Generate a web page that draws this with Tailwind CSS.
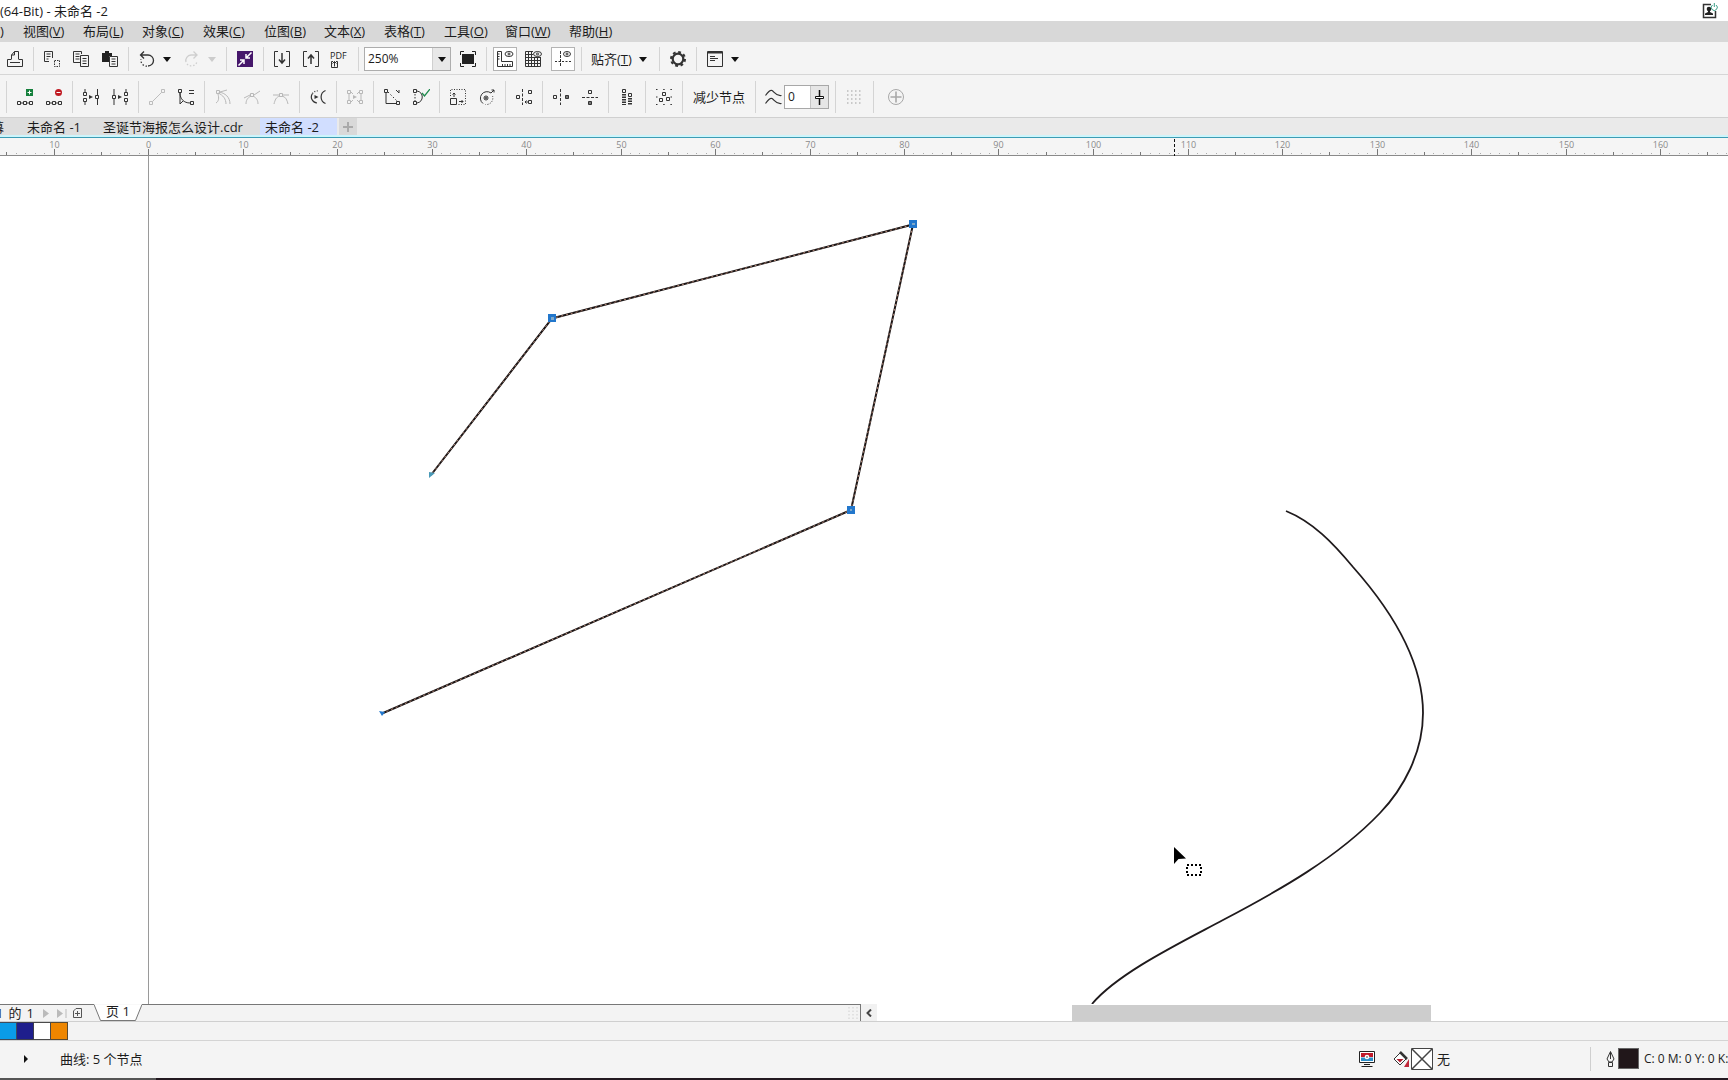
<!DOCTYPE html>
<html lang="zh-CN">
<head>
<meta charset="utf-8">
<title>未命名 -2</title>
<script src="https://cdn.jsdelivr.net/npm/@tailwindcss/browser@4"></script>
</head>
<body class="flex h-screen flex-col overflow-hidden bg-white font-['Open_Sans','Noto_Sans_CJK_SC',sans-serif] text-[13px] leading-4 text-[#1c1c1c]">

<!-- Title bar -->
<header class="flex h-[21px] shrink-0 items-center justify-between pr-2.5">
  <h1>(64-Bit) - 未命名 -2</h1>
  <button aria-label="登录" class="h-4 w-4">
    <svg width="16" height="16" viewBox="0 0 16 16" fill="none"><path d="M9 1.5H1.5v13h12V8" stroke="#333" stroke-width="1.5"/><circle cx="7" cy="6" r="2.3" fill="#222"/><path d="M6 7h2v2l3 1.5V12H3v-1.500L6 9z" fill="#222"/><path d="M10.500 2a3 3 0 1 0 3.500 0M12.300 0v4" stroke="#3a9d86"/></svg>
  </button>
</header>

<!-- Menu bar -->
<nav class="h-[21px] shrink-0 bg-[#d8d8d8] pb-0.5">
  <ul class="flex h-full items-center whitespace-nowrap">
    <li class="w-[23px]"><a href="#">)</a></li>
    <li class="w-[60px]"><a href="#">视图(<u>V</u>)</a></li>
    <li class="w-[59px]"><a href="#">布局(<u>L</u>)</a></li>
    <li class="w-[61px]"><a href="#">对象(<u>C</u>)</a></li>
    <li class="w-[61px]"><a href="#">效果(<u>C</u>)</a></li>
    <li class="w-[60px]"><a href="#">位图(<u>B</u>)</a></li>
    <li class="w-[60px]"><a href="#">文本(<u>X</u>)</a></li>
    <li class="w-[60px]"><a href="#">表格(<u>T</u>)</a></li>
    <li class="w-[61px]"><a href="#">工具(<u>O</u>)</a></li>
    <li class="w-[64px]"><a href="#">窗口(<u>W</u>)</a></li>
    <li><a href="#">帮助(<u>H</u>)</a></li>
  </ul>
</nav>

<!-- Standard toolbar -->
<div role="toolbar" aria-label="标准" class="flex h-[33px] shrink-0 items-center border-b border-[#d6d6d6] bg-[#f4f4f4] pl-px pt-0.5">
  <button aria-label="打印" class="w-[29px] pl-1.5"><svg width="16" height="16" viewBox="0 0 16 16" fill="none" stroke="#333"><path d="M4.500 8.500V4l3-3.500h4v8M7.500 .5V4h-3M4 8.500H.5v7h15v-7H12M3 11.500h10"/></svg></button>
  <span class="ml-[3px] mr-1 h-6 w-px bg-[#d4d4d4]"></span>
  <button aria-label="剪切" class="w-[29px] pl-1.5"><svg width="16" height="16" viewBox="0 0 16 16" fill="none" stroke="#333"><path d="M5 10.500H.5v-10h8V7M2.500 3h4M2.500 5.500h4M2.500 8h2"/><path d="M10.500 9.500h5v6h-5z" stroke-dasharray="1.500 1"/></svg></button>
  <button aria-label="复制" class="w-[29px] pl-1.5"><svg width="16" height="16" viewBox="0 0 16 16" fill="none" stroke="#333"><path d="M7 11.500H.5v-11h8V3M2.500 3h4M2.500 5.500h4M2.500 8h4M7.500 4.500h8v11h-8zM9.500 7.500h4M9.500 10h4M9.500 12.500h4"/></svg></button>
  <button aria-label="粘贴" class="w-[29px] pl-1.5"><svg width="16" height="16" viewBox="0 0 16 16" fill="none" stroke="#333"><path d="M0 2h3V0h4v2h3v3H7v6H0z" fill="#222" stroke="none"/><path d="M7.500 5.500h8v10h-8zM9.500 8h4M9.500 10.500h4M9.500 13h4"/></svg></button>
  <span class="ml-[3px] mr-1 h-6 w-px bg-[#d4d4d4]"></span>
  <button aria-label="撤消" class="w-[29px] pl-1.5"><svg width="16" height="16" viewBox="0 0 16 16" fill="none" stroke="#333" stroke-width="1.300"><path d="M1.500 4H9a5.500 5.500 0 0 1 0 11M5 .5L1.500 4 5 7.500"/><path d="M8 15.200a6 6 0 0 1-6-7" stroke-dasharray="1.500 1.800"/></svg></button>
  <button aria-label="撤消列表" class="w-4"><svg width="10" height="5" viewBox="0 0 10 5"><path d="M1 0h8L5 5z" fill="#111"/></svg></button>
  <button aria-label="重做" disabled class="w-[29px] pl-1.5"><svg width="16" height="16" viewBox="0 0 16 16" fill="none" stroke="#cfcfcf" stroke-width="1.300"><path d="M13 4H7a5.500 5.500 0 0 0-5 7M9.500 .5L13 4 9.500 7.500"/><path d="M3 13a6 6 0 0 0 10-2" stroke-dasharray="1.500 1.800"/></svg></button>
  <button aria-label="重做列表" disabled class="w-4"><svg width="10" height="5" viewBox="0 0 10 5"><path d="M1 0h8L5 5z" fill="#ccc"/></svg></button>
  <span class="ml-[3px] mr-1 h-6 w-px bg-[#d4d4d4]"></span>
  <button aria-label="搜索内容" class="w-[29px] pl-1.5"><svg width="16" height="16" viewBox="0 0 16 16" fill="none" stroke="#fff"><path d="M0 0h16v16H0z" fill="#46176b" stroke="none"/><path d="M14.500 1.500L9.500 6.500M9 3v4h4M1.500 14.500l5-5M7 13V9H3" stroke-width="1.500"/></svg></button>
  <span class="ml-[3px] mr-1 h-6 w-px bg-[#d4d4d4]"></span>
  <button aria-label="导入" class="w-[29px] pl-1.5"><svg width="16" height="16" viewBox="0 0 16 16" fill="none" stroke="#333"><path d="M4 .5H.5v15H4M12 .5h3.500v15H12"/><path d="M8 2v9M5 8.500L8 12l3-3.500" stroke-width="1.500"/></svg></button>
  <button aria-label="导出" class="w-[29px] pl-1.5"><svg width="16" height="16" viewBox="0 0 16 16" fill="none" stroke="#333"><path d="M4 .5H.5v15H4M12 .5h3.500v15H12"/><path d="M8 13V4M5 7.500L8 4l3 3.500" stroke-width="1.500"/></svg></button>
  <button aria-label="发布为 PDF" class="flex w-[29px] flex-col items-start pl-1 text-[9px] leading-[9px]">PDF<svg width="16" height="8" viewBox="0 0 16 8" fill="none" stroke="#333"><path d="M3 1.500H1.500v6h6v-6H6M4.500 6.500V1.500M2.500 3.500l2-2 2 2"/></svg></button>
  <span class="ml-[3px] mr-[5px] h-6 w-px bg-[#d4d4d4]"></span>
  <div class="flex h-6 w-[87px] border border-[#adadad] bg-white">
    <input aria-label="缩放级别" value="250%" class="w-0 flex-1 pl-[3px] text-[12px] outline-none">
    <button aria-label="缩放列表" class="flex w-[18px] items-center justify-center border-l border-[#d0d0d0] bg-[#e8e8e8]"><svg width="8" height="5" viewBox="0 0 8 5"><path d="M0 0h8L4 5z" fill="#111"/></svg></button>
  </div>
  <button aria-label="全屏预览" class="ml-[3px] w-[29px] pl-1.5"><svg width="16" height="16" viewBox="0 0 16 16" fill="none" stroke="#222"><path d="M2 3h12v10H2z" fill="#222" stroke="none"/><path d="M4 .5H.5V4M12 .5h3.500V4M4 15.500H.5V12M12 15.500h3.500V12"/></svg></button>
  <span class="ml-[3px] mr-1.5 h-6 w-px bg-[#d4d4d4]"></span>
  <button aria-label="显示标尺" aria-pressed="true" class="mr-[5px] flex h-6 w-6 items-center justify-center border border-[#b4b4b4] bg-white"><svg width="18" height="16" viewBox="0 0 18 16" fill="none" stroke="#333"><path d="M1.500 .5h4v10h11v5h-15zM1.500 3h2M1.500 5.500h2M1.500 8h2M6.500 15.500V13M9 15.500V13M11.500 15.500V13M14 15.500V13"/><ellipse cx="13" cy="3" rx="4" ry="2.500"/><circle cx="13" cy="3" r="1"/></svg></button>
  <button aria-label="显示网格" class="mr-[5px] flex h-6 w-6 items-center justify-center"><svg width="18" height="16" viewBox="0 0 18 16" fill="none" stroke="#333"><path d="M8 .5H.5v15h15V6M.5 3.500H8M.5 6.500h15M.5 9.500h15M.5 12.500h15M3.500 .5v15M6.500 .5v15M9.500 6v9.500M12.500 6v9.500"/><ellipse cx="12.500" cy="3" rx="4" ry="2.500"/><circle cx="12.500" cy="3" r="1"/></svg></button>
  <button aria-label="显示辅助线" aria-pressed="true" class="flex h-6 w-6 items-center justify-center border border-[#b4b4b4] bg-white"><svg width="18" height="16" viewBox="0 0 18 16" fill="none" stroke="#333"><path d="M6.500 0v16" stroke-dasharray="3 1"/><path d="M1 10.500h16" stroke-dasharray="2 1.500"/><ellipse cx="13" cy="3" rx="3.500" ry="2.500"/><circle cx="13" cy="3" r="1"/></svg></button>
  <span class="ml-1.5 mr-1 h-6 w-px bg-[#d4d4d4]"></span>
  <button class="flex w-[70px] items-center gap-1.5 whitespace-nowrap pl-[5px]"><span>贴齐(<u>T</u>)</span><svg class="shrink-0" width="10" height="5" viewBox="0 0 10 5"><path d="M1 0h8L5 5z" fill="#111"/></svg></button>
  <span class="ml-[3px] mr-1 h-6 w-px bg-[#d4d4d4]"></span>
  <button aria-label="选项" class="w-[29px] pl-1.5"><svg width="16" height="16" viewBox="0 0 16 16" fill="none" stroke="#333"><circle cx="8" cy="8" r="5.300" stroke-width="2.200"/><circle cx="8" cy="8" r="7" stroke-width="2" stroke-dasharray="2.800 2.700"/></svg></button>
  <span class="ml-[3px] mr-1 h-6 w-px bg-[#d4d4d4]"></span>
  <button aria-label="启动器" class="w-[29px] pl-1.5"><svg width="16" height="16" viewBox="0 0 16 16" fill="none" stroke="#333"><path d="M.5 .5h15v15H.5z"/><path d="M1 1.500h14" stroke-width="2"/><path d="M3 5.500h5M3 7.500h8M3 9.500h5"/></svg></button>
  <button aria-label="启动器列表" class="w-4"><svg width="10" height="5" viewBox="0 0 10 5"><path d="M1 0h8L5 5z" fill="#111"/></svg></button>
</div>

<!-- Node editing toolbar -->
<div role="toolbar" aria-label="节点" class="flex h-[43px] shrink-0 items-center border-b border-[#d0d0d0] bg-[#f4f4f4] pl-[3px] pt-0.5">
  <span class="ml-[3px] mr-1 h-8 w-px bg-[#d4d4d4]"></span>
  <button aria-label="添加节点" class="w-[29px] pl-1.5"><svg width="16" height="16" viewBox="0 0 16 16" fill="none" stroke="#333"><path d="M9 0h7v7H9z" fill="#15803c" stroke="none"/><path d="M10.500 3.500h4M12.500 1.500v4" stroke="#fff"/><path d="M.5 12.500h3v3h-3zM6.500 12.500h3v3h-3zM12.500 12.500h3v3h-3zM3.500 14h3M9.500 14h3"/></svg></button>
  <button aria-label="删除节点" class="w-[29px] pl-1.5"><svg width="16" height="16" viewBox="0 0 16 16" fill="none" stroke="#333"><circle cx="12.500" cy="3.500" r="3.500" fill="#c01a22" stroke="none"/><path d="M10.500 3.500h4" stroke="#fff"/><path d="M.5 12.500h3v3h-3zM6.500 12.500h3v3h-3zM12.500 12.500h3v3h-3zM3.500 14h3M9.500 14h3"/></svg></button>
  <span class="ml-[3px] mr-1 h-8 w-px bg-[#d4d4d4]"></span>
  <button aria-label="连接两个节点" class="w-[29px] pl-1.5"><svg width="16" height="16" viewBox="0 0 16 16" fill="none" stroke="#333"><path d="M.5 3.500h3v3h-3zM.5 9.500h3v3h-3zM2 0v3M2 13v3M12.500 6.500h3v3h-3zM14.500 0v6M14.500 10v6"/><path d="M6 6l4 2-4 2z" fill="#333" stroke="none"/></svg></button>
  <button aria-label="断开曲线" class="w-[29px] pl-1.5"><svg width="16" height="16" viewBox="0 0 16 16" fill="none" stroke="#333"><path d="M12.500 3.500h3v3h-3zM12.500 9.500h3v3h-3zM14 0v3M14 13v3M.5 6.500h3v3h-3zM2 0v6M2 10v6"/><path d="M6 6l4 2-4 2z" fill="#333" stroke="none"/></svg></button>
  <span class="ml-[3px] mr-1 h-8 w-px bg-[#d4d4d4]"></span>
  <button aria-label="转换为线条" disabled class="w-[29px] pl-1.5"><svg width="16" height="16" viewBox="0 0 16 16" fill="none" stroke="#bdbdbd"><path d="M.5 12.500h3v3h-3zM12.500 .5h3v3h-3zM3.500 12.500l9-9"/></svg></button>
  <button aria-label="转换为曲线" class="w-[29px] pl-1.5"><svg width="16" height="16" viewBox="0 0 16 16" fill="none" stroke="#333"><path d="M.5 .5h3v3h-3zM12.500 12.500h3v3h-3zM2 4c0 6 4 10 10 10M2 4v11l3-3M11 1.500h5M11 4.500h5"/></svg></button>
  <span class="ml-[3px] mr-1 h-8 w-px bg-[#d4d4d4]"></span>
  <button aria-label="尖突节点" disabled class="w-[29px] pl-1.5"><svg width="16" height="16" viewBox="0 0 16 16" fill="none" stroke="#b8b8b8"><path d="M1.500 1.500h3v3h-3zM4 3c6 1 11 5 11 12M3 4c5 2 8 6 8 11M3 5C4 9 4 12 1 14M5 3l7-2"/></svg></button>
  <button aria-label="平滑节点" disabled class="w-[29px] pl-1.5"><svg width="16" height="16" viewBox="0 0 16 16" fill="none" stroke="#b8b8b8"><path d="M6.500 4.500h3v3h-3zM0 9l6-3M10 6l6-4M7 7c-4 2-5 5-5 8M9 7c4 2 5 5 5 8"/></svg></button>
  <button aria-label="对称节点" disabled class="w-[29px] pl-1.5"><svg width="16" height="16" viewBox="0 0 16 16" fill="none" stroke="#b8b8b8"><path d="M6.500 4.500h3v3h-3zM0 6h6M10 6h6M7 7c-4 1-5 4-6 8M9 7c4 1 5 4 6 8"/></svg></button>
  <span class="ml-[3px] mr-1 h-8 w-px bg-[#d4d4d4]"></span>
  <button aria-label="反转方向" class="w-[29px] pl-1.5"><svg width="16" height="16" viewBox="0 0 16 16" fill="none" stroke="#333" stroke-width="1.200"><path d="M2.500 4.500a6 6 0 0 0 4.500 9.500M15.500 1.500a7 7 0 0 0 0 13"/><path d="M2.500 4.500A6 6 0 0 1 8 2" stroke-dasharray="1 1.500"/><path d="M4.500 6l4 2-4 2z" fill="#333" stroke="none"/></svg></button>
  <span class="ml-[3px] mr-1 h-8 w-px bg-[#d4d4d4]"></span>
  <button aria-label="提取子路径" disabled class="w-[29px] pl-1.5"><svg width="16" height="16" viewBox="0 0 16 16" fill="none" stroke="#b8b8b8"><path d="M.5 1.500h3v3h-3zM.5 11.500h3v3h-3zM12.500 1.500h3v3h-3zM12.500 11.500h3v3h-3zM2 5v6M14 5v6M4 3l2 2M4 13l2-2M12 3l-2 2M12 13l-2-2"/><path d="M6 6l4 2-4 2z" fill="#b8b8b8" stroke="none"/></svg></button>
  <span class="ml-[3px] mr-1 h-8 w-px bg-[#d4d4d4]"></span>
  <button aria-label="延长曲线使之闭合" class="w-[29px] pl-1.5"><svg width="16" height="16" viewBox="0 0 16 16" fill="none" stroke="#333"><path d="M.5 .5h3v3h-3zM12.500 12.500h3v3h-3zM2 4v10.500h10"/><path d="M4 3l9 9" stroke-dasharray="1.500 2"/><path d="M12 1l3 3M15 1v3"/></svg></button>
  <button aria-label="闭合曲线" class="w-[29px] pl-1.5"><svg width="17" height="16" viewBox="0 0 17 16" fill="none" stroke="#333"><path d="M.5 .5h3v3h-3zM.5 12.500h3v3h-3zM4 2c7 1 7 11 0 12"/><path d="M2 5v7" stroke-dasharray="1.500 1.500"/><path d="M9 4l2.500 3L17 0" stroke="#1e8a4c" stroke-width="1.300"/></svg></button>
  <span class="ml-[3px] mr-1 h-8 w-px bg-[#d4d4d4]"></span>
  <button aria-label="延展与缩放节点" class="w-[29px] pl-1.5"><svg width="16" height="16" viewBox="0 0 16 16" fill="none" stroke="#333"><path d="M.5 9.500h6v6h-6z"/><path d="M.5 7V.5h15v15H8" stroke-dasharray="1 1.500"/><path d="M4 4v4M2.500 5.500L4 4l1.500 1.500M9 12.500h4M11.500 11l1.500 1.500-1.500 1.500"/></svg></button>
  <button aria-label="旋转与倾斜节点" class="w-[29px] pl-1.5"><svg width="16" height="16" viewBox="0 0 16 16" fill="none" stroke="#333"><path d="M4 14.500A6.500 6.500 0 1 1 12 4"/><path d="M13.500 7a6.500 6.500 0 0 1-7 8.500" stroke-dasharray="1 1.500"/><circle cx="7" cy="9" r="2"/><circle cx="7" cy="9" r=".7"/><path d="M12 4l3-3M12.500 1H15v2.500"/></svg></button>
  <span class="ml-[3px] mr-1 h-8 w-px bg-[#d4d4d4]"></span>
  <button aria-label="对齐节点" class="w-[29px] pl-1.5"><svg width="16" height="16" viewBox="0 0 16 16" fill="none" stroke="#333"><path d="M.5 6.500h3v3h-3zM12.500 1.500h3v3h-3zM12.500 11.500h3v3h-3z"/><path d="M6.500 0v16" stroke-dasharray="3 1.500"/><path d="M9 13h3M10.500 11.500L9 13l1.500 1.500"/></svg></button>
  <span class="ml-[3px] mr-1 h-8 w-px bg-[#d4d4d4]"></span>
  <button aria-label="水平反射节点" class="w-[29px] pl-1.5"><svg width="16" height="16" viewBox="0 0 16 16" fill="none" stroke="#333"><path d="M.5 6.500h3v3h-3z"/><path d="M12.500 6.500h3v3h-3z" fill="#777"/><path d="M7.500 0v16" stroke-dasharray="3 1.500"/></svg></button>
  <button aria-label="垂直反射节点" class="w-[29px] pl-1.5"><svg width="16" height="16" viewBox="0 0 16 16" fill="none" stroke="#333"><path d="M6.500 1.500h3v3h-3z"/><path d="M6.500 12.500h3v3h-3z" fill="#777"/><path d="M0 8.500h16" stroke-dasharray="3 1.500"/></svg></button>
  <span class="ml-[3px] mr-1 h-8 w-px bg-[#d4d4d4]"></span>
  <button aria-label="弹性模式" class="w-[29px] pl-1.5"><svg width="16" height="16" viewBox="0 0 16 16" fill="none" stroke="#333"><path d="M3.500 .5h3v3h-3zM9.500 4.500h3v3h-3z"/><path d="M5 5v11M11 9v7" stroke-width="4" stroke-dasharray="1.500 1"/></svg></button>
  <span class="ml-[3px] mr-1 h-8 w-px bg-[#d4d4d4]"></span>
  <button aria-label="选择所有节点" class="w-[29px] pl-1.5"><svg width="16" height="16" viewBox="0 0 16 16" fill="none" stroke="#333"><path d="M6.500 3.500h3v3h-3zM3.500 9.500h3v3h-3zM10.500 8.500h3v3h-3z"/><path d="M0 .5h16M0 15.500h16" stroke-dasharray="1.500 5.700"/><path d="M0 8h1.500M14.500 8H16"/></svg></button>
  <span class="ml-[3px] mr-1 h-8 w-px bg-[#d4d4d4]"></span>
  <button class="w-[65px] whitespace-nowrap pl-1.5 text-left">减少节点</button>
  <span class="ml-[3px] mr-1 h-8 w-px bg-[#d4d4d4]"></span>
  <label for="smooth" aria-label="曲线平滑度" class="w-6 pl-[5px]"><svg width="17" height="16" viewBox="0 0 17 16" fill="none" stroke="#333" stroke-width="1.200"><path d="M.5 6.500C3 3 5 .5 7 1.500s4 6 9.500 5M.5 14.500C3 11 5 8.500 7 9.500s4 6 9.500 5"/></svg></label>
  <div class="mr-[3px] flex h-6 w-[45px] border border-[#a8a8a8] bg-white">
    <input id="smooth" value="0" class="w-0 flex-1 pl-[3px] text-[12px] outline-none">
    <button aria-label="平滑度滑块" class="flex w-[18px] items-center justify-center border-l border-[#c4c4c4] bg-[#e6e6e6]"><svg width="9" height="15" viewBox="0 0 9 15" fill="#fff" stroke="#111"><path d="M4.500 0v15" stroke-width="1.500"/><path d="M.5 6.500h8v2h-8z"/></svg></button>
  </div>
  <span class="ml-[3px] mr-1 h-8 w-px bg-[#d4d4d4]"></span>
  <button aria-label="边框" disabled class="w-[29px] pl-1.5"><svg width="16" height="16" viewBox="0 0 16 16" fill="none" stroke="#bbb" stroke-width="1.500"><path d="M1 2h15M1 6h15M1 10h15M1 14h15" stroke-dasharray="1.500 2.500"/></svg></button>
  <span class="ml-1 mr-2 h-8 w-px bg-[#d4d4d4]"></span>
  <button aria-label="自定义" class="w-[29px] pl-1.5"><svg width="16" height="16" viewBox="0 0 16 16" fill="none" stroke="#a8a8a8"><circle cx="8" cy="8" r="7.500"/><path d="M8 2.500v11M2.500 8h11" stroke-width="1.600"/></svg></button>
</div>

<!-- Document tabs -->
<div role="tablist" class="flex h-[17px] shrink-0 items-stretch bg-[#eaeaea] whitespace-nowrap">
  <button role="tab" class="flex w-[22px] items-center justify-end overflow-hidden bg-[#dedede] pr-[18px]">屏幕</button>
  <button role="tab" class="flex w-[69px] items-center bg-[#dedede] pl-[5px]">未命名 -1</button>
  <button role="tab" class="flex w-[169px] items-center bg-[#dedede] pl-3">圣诞节海报怎么设计.cdr</button>
  <button role="tab" aria-selected="true" class="flex w-[77px] items-center bg-[#d1deff] pl-[5px]">未命名 -2</button>
  <button aria-label="新建文档" class="ml-0.5 flex w-[18px] items-center justify-center bg-[#d9d9d9]"><svg width="10" height="10" viewBox="0 0 10 10" stroke="#aaa" stroke-width="2"><path d="M5 0v10M0 5h10"/></svg></button>
</div>
<div class="h-[3px] shrink-0 border-b border-[#3c9cb4] bg-[#cdf5fb]"></div>

<!-- Horizontal ruler -->
<svg id="ruler" class="h-[18px] w-full shrink-0 bg-[#f5f5f5] font-['Open_Sans',sans-serif]"></svg>

<!-- Drawing page -->
<main class="min-h-0 flex-1 overflow-hidden bg-white">
  <svg class="h-full w-full" fill="none">
    <g transform="translate(0 -156)">
      <path d="M148.500 156V1400" stroke="#9a9a9a"/>
      <path d="M382 713.500L851 510 913 224.500 552 318.500 431 475" stroke="#1a1414" stroke-width="2"/>
      <path d="M382 713.500L851 510 913 224.500 552 318.500 431 475" stroke="#b08474" stroke-width="1" stroke-dasharray="2 3"/>
      <g fill="#2277cc"><path d="M847 506h8v8h-8zM909 220h8v8h-8zM548 314h8v8h-8z"/><path d="M379 711l6 1-3 4z"/></g>
      <path d="M429 472l6 1-6 5z" fill="#4a9ab8"/>
      <g fill="#7fa8c8"><path d="M850 509h2v2h-2zM912 223h3v2h-3zM551 317h3v3h-3z"/></g>
      <path d="M1286 511C1313 522 1333 543 1353 567C1400 620 1423 669 1423 713C1423 753 1403 789 1380 813C1337 858 1280 890 1223 920C1180 943 1118 973 1092 1004" stroke="#1f1a1c" stroke-width="1.800"/>
      <path d="M1174 847v17l4.500-5 7.500-.5z" fill="#000"/>
      <path d="M1187 865h14v10h-14z" stroke="#000" stroke-width="2" stroke-dasharray="2 2"/>
    </g>
  </svg>
</main>

<!-- Page navigator and horizontal scrollbar -->
<div class="flex h-[18px] shrink-0 items-stretch border-b border-[#cfcfcf] bg-white">
  <div class="flex w-[861px] items-stretch border-r border-[#777] bg-[#f3f3f3]">
    <div class="flex w-[94px] items-center border-t border-[#777] whitespace-nowrap">
      <span class="flex w-[42px] gap-[5px] overflow-hidden"><span class="-ml-1">1</span><span>的</span><span>1</span></span>
      <button aria-label="下一页" class="w-[15px]"><svg width="8" height="9" viewBox="0 0 8 9"><path d="M1 0l6 4.500L1 9z" fill="#bbb"/></svg></button>
      <button aria-label="最后一页" class="w-4"><svg width="10" height="9" viewBox="0 0 10 9"><path d="M0 0l6 4.500L0 9zM8.500 0h1v9h-1z" fill="#bbb"/></svg></button>
      <button aria-label="添加页面"><svg width="10" height="10" viewBox="0 0 10 10" fill="none" stroke="#555"><path d="M3 .5h5.500v9H.5V3zM4.500 3v5M2 5.500h5"/></svg></button>
    </div>
    <button class="relative h-[17px] w-[48px]">
      <svg class="absolute inset-0" width="48" height="17" fill="#fff" stroke="#777"><path d="M0 .5L6.500 16.500h35L48 .5"/></svg>
      <span class="absolute inset-0 -top-px">页 1</span>
    </button>
    <div class="flex flex-1 items-center justify-end border-t border-[#777] pr-0.5">
      <svg width="10" height="12" viewBox="0 0 10 12" stroke="#dcdcdc" stroke-width="1.500" stroke-dasharray="1.500 2"><path d="M1 0v12M5 0v12M9 0v12"/></svg>
    </div>
  </div>
  <button aria-label="向左滚动" class="flex w-4 items-center justify-center bg-[#f1f1f1]"><svg width="6" height="8" viewBox="0 0 6 8" fill="none" stroke="#444" stroke-width="2"><path d="M5 .5L1.500 4 5 7.500"/></svg></button>
  <div class="flex flex-1 items-center pl-[195px]"><div class="h-4 w-[359px] bg-[#cdcdcd]"></div></div>
</div>

<!-- Document palette -->
<div class="flex h-[19px] shrink-0 items-center border-b border-[#d4d4d4] bg-[#f3f3f3]">
  <button aria-label="青" class="h-[18px] w-[17px] border-y border-r border-[#3d4c5c] bg-[#0a9ce8]"></button>
  <button aria-label="蓝" class="h-[18px] w-[17px] border-y border-r border-[#3d3d4c] bg-[#1e1e8c]"></button>
  <button aria-label="白" class="h-[18px] w-[17px] border-y border-r border-[#4a4a4a] bg-white"></button>
  <button aria-label="橙" class="h-[18px] w-[17px] border-y border-r border-[#5a4a30] bg-[#ee8600]"></button>
</div>

<!-- Status bar -->
<footer class="flex h-[37px] shrink-0 items-center justify-between overflow-hidden bg-[#f4f4f4] pb-0.5 pl-6 whitespace-nowrap">
  <div class="flex items-center gap-8">
    <button aria-label="展开"><svg width="4" height="8" viewBox="0 0 4 8"><path d="M0 0l4 4-4 4z" fill="#111"/></svg></button>
    <span>曲线: 5 个节点</span>
  </div>
  <div class="flex w-[369px] shrink-0 items-center">
    <svg class="mr-[18px] shrink-0" width="16" height="16" viewBox="0 0 16 16" fill="none"><path d="M.5 .5h15v11H.5z" fill="#fff" stroke="#222"/><path d="M2 2h12v4H2z" fill="#c01a2b"/><path d="M2 6.500h12V10H2z" fill="#2c8ec8"/><circle cx="8" cy="6" r="2.300" fill="#fff"/><circle cx="8" cy="6" r="1" fill="#888"/><path d="M5 13.500h6M2.500 15.500h11" stroke="#222"/></svg>
    <svg class="mr-0.5 shrink-0" width="16" height="16" viewBox="0 0 16 16" fill="none"><path d="M7 2l6 6-6 6-6-6z" fill="#fff" stroke="#333"/><path d="M7 1l7 7" stroke="#333" stroke-width="2.500"/><path d="M3.500 8h7L7 11.500z" fill="#b01c2e"/><path d="M16 8v8h-5z" fill="#c0283a"/></svg>
    <svg class="shrink-0" width="22" height="22" viewBox="0 0 22 22" fill="#fff" stroke="#444"><path d="M.5 .5h21v21H.5z"/><path d="M1 1l20 20M21 1L1 21" stroke-width="1.500"/></svg>
    <span class="w-[157px] shrink-0 pl-1">无</span>
    <span class="h-6 w-px shrink-0 bg-[#cfcfcf]"></span>
    <svg class="ml-[15px] mr-[3px] shrink-0" width="9" height="16" viewBox="0 0 9 16" fill="none" stroke="#333"><path d="M4.500 .5L1 8l2 3h3l2-3zM4.500 1v7M2.500 11.500h4v4h-4z"/></svg>
    <span class="h-[21px] w-[21px] shrink-0 border border-[#666] bg-[#21171a]"></span>
    <span class="shrink-0 pl-[5px] text-[12px]">C: 0 M: 0 Y: 0 K:</span>
  </div>
</footer>
<div class="flex h-0.5 shrink-0"><span class="w-[156px] bg-[#555]"></span><span class="flex-1 bg-[#221820]"></span></div>

<script>
  // Ruler: 94.5px per 10 units, origin at x = 148.5
  const ruler = document.getElementById('ruler');
  const origin = 148.5, step = 9.45;
  function drawRuler() {
    const width = window.innerWidth;
    let marks = `<path d="M0 17.5H${width}" stroke="#8a8a8a"/>`;
    for (let i = -15; origin + i * step < width; i++) {
      const x = Math.round(origin + i * step - 0.5) + 0.5;
      const h = i % 10 === 0 ? 6 : i % 5 === 0 ? 3 : 1;
      const y = h === 1 ? 15 : 17 - h;
      marks += `<path d="M${x} ${y}v${h}" stroke="${h === 1 ? '#aaa' : '#777'}"/>`;
      if (i % 10 === 0) marks += `<text x="${x}" y="10" font-size="9" text-anchor="middle" fill="#8a8a8a">${Math.abs(i)}</text>`;
    }
    marks += '<path d="M1174.500 1v17" stroke="#111" stroke-dasharray="3 2"/>';
    ruler.innerHTML = marks;
  }
  drawRuler();
  window.addEventListener('resize', drawRuler);
</script>
</body>
</html>
